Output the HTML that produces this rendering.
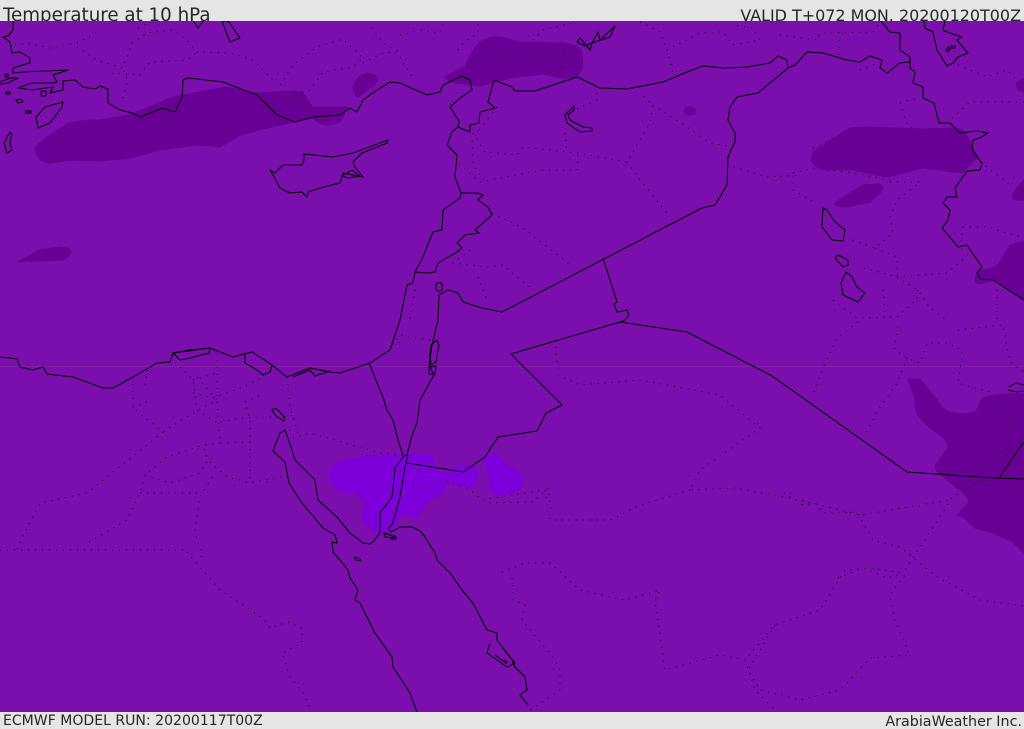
<!DOCTYPE html>
<html><head><meta charset="utf-8"><title>Temperature at 10 hPa</title>
<style>
html,body{margin:0;padding:0;background:#e5e5e5;width:1024px;height:729px;overflow:hidden}
svg{display:block;position:absolute;left:0;top:0}
text{font-family:"DejaVu Sans",sans-serif;fill:#262626}
.c{fill:none;stroke:#000;stroke-width:1;stroke-linejoin:round}
.d{fill:none;stroke:#000;stroke-width:1;stroke-dasharray:1 6;stroke-linecap:butt;opacity:.8}
</style></head><body>
<svg width="1024" height="729" viewBox="0 0 1024 729" xmlns="http://www.w3.org/2000/svg">
<defs><clipPath id="m"><rect x="0" y="21" width="1024" height="691"/></clipPath></defs>
<rect width="1024" height="729" fill="#e5e5e5"/>
<text x="3" y="21" font-size="18.25">Temperature at 10 hPa</text>
<text x="1021" y="21" font-size="15.95" text-anchor="end">VALID T+072 MON. 20200120T00Z</text>
<text x="3" y="725" font-size="14.05">ECMWF MODEL RUN: 20200117T00Z</text>
<text x="1022" y="726" font-size="14.3" text-anchor="end">ArabiaWeather Inc.</text>
<g clip-path="url(#m)">
<rect x="0" y="21" width="1024" height="691" fill="#7a0fae"/>
<rect x="0" y="366" width="1024" height="1" fill="#85259f" opacity=".7"/>
<g fill="#680095" stroke="#680095" stroke-width="1" stroke-linejoin="round">
<path d="M35 150Q36 145 43 140L67 124Q80 120 100 120L130 115L173 97L227 87L257 93L293 91Q303 91 306 97L312 107L347 107L342 120Q335 125 328 125Q318 124 313 118L293 122L267 128L240 135L220 147Q210 146 197 145L160 150L130 158L100 161L73 160L50 163Q38 162 35 150Z"/>
<path d="M367 73Q377 74 378 80Q375 86 370 88L358 97Q353 94 353 88Q354 78 367 73Z"/>
<path d="M445 77L465 67Q472 50 480 42Q490 36 500 37L520 42L563 43Q580 45 582 52L583 67L577 77L563 78L543 74L510 78L480 86L457 83Q447 81 445 77Z"/>
<ellipse cx="690" cy="111" rx="5.5" ry="4"/>
<path d="M811 157Q812 152 820 147L850 128L867 127L920 129L957 128L965 132L978 157L962 173L923 168L887 177L853 170L827 170Q812 168 811 157Z"/>
<path d="M834 203L863 185L880 184Q884 188 881 192L870 202L847 207Q836 207 834 203Z"/>
<path d="M18 262L40 250L60 247Q72 248 71 252Q68 259 60 260L40 261Z"/>
<path d="M1016 83L1024 78V92L1018 90Z"/>
<path d="M1012 197Q1014 190 1024 180V200Q1013 201 1012 197Z"/>
<path d="M975 282L977 272L993 268Q1000 264 1003 257L1010 245L1024 241V300L993 280L980 284Z"/>
<path d="M908 379L920 379L937 400Q943 410 950 412Q965 415 970 413Q977 412 978 408Q980 400 983 398Q995 394 1007 394L1024 394V553L1013 542L993 533L975 528L965 518L957 515L969 502Q968 496 960 490L942 476Q932 468 937 463L948 448Q948 440 937 433Q925 425 918 415Q914 408 915 398Z"/>
</g>
<g fill="#7d00db" stroke="#7d00db" stroke-width="1" stroke-linejoin="round">
<path d="M329 475Q332 465 338 462L370 455L403 455L432 454L435 468L442 474L460 466L475 466Q478 475 477 483Q472 487 467 487L445 482L445 490L427 502L417 517L400 515L393 528L380 533L370 528Q362 522 362 517L365 503Q362 496 355 493L340 491Q331 486 329 475Z"/>
<path d="M483 460L493 453Q500 456 507 465L522 475Q524 482 522 487Q512 495 500 495Q491 494 490 488L488 473Z"/>
</g>
<g class="d">
<path d="M15 45L28 43L50 48L77 43L92 35L97 32"/>
<path d="M77 47L97 60L122 68L128 55L132 43L147 33L173 30L187 40L197 52L230 53L253 60L273 80"/>
<path d="M112 73L140 75L150 62L187 60L197 52"/>
<path d="M123 98L128 80L122 68"/>
<path d="M280 85L293 65L317 47L343 39L363 58L353 67L323 72L310 90L283 98L295 102L310 100"/>
<path d="M363 63L383 53L400 52L383 43L370 25"/>
<path d="M138 28L150 22"/>
<path d="M400 35L420 30L440 33L443 22"/>
<path d="M400 57L413 78"/>
<path d="M458 50L463 43L478 33L478 22"/>
<path d="M533 40L543 30L573 23"/>
<path d="M467 63L515 60L550 50L567 48L557 63L563 73"/>
<path d="M640 22L660 32L667 50L673 73"/>
<path d="M667 50L700 33L723 32L733 45L760 40L753 28L733 25"/>
<path d="M497 107L472 140L473 163L483 180"/>
<path d="M473 133L485 152L517 155L523 147L577 153L627 162L650 123L653 105L640 93"/>
<path d="M653 105L687 127L710 143L733 147"/>
<path d="M627 162L638 177L670 217"/>
<path d="M578 155L577 170L543 170L480 182L458 163"/>
<path d="M597 93L597 100L575 110"/>
<path d="M565 133L567 152"/>
<path d="M492 213L523 228L573 267"/>
<path d="M470 250L453 263L487 267L503 265L533 290"/>
<path d="M478 277L488 303"/>
<path d="M727 165L767 177L800 175"/>
<path d="M780 35L817 40L820 33L873 32L880 23"/>
<path d="M839 40L839 55"/>
<path d="M860 70L880 62"/>
<path d="M958 65L987 77L1007 70L1017 80"/>
<path d="M900 102L920 98"/>
<path d="M900 103L908 127L918 128"/>
<path d="M947 123L970 102L1024 102"/>
<path d="M780 177L793 175L793 190L815 203"/>
<path d="M793 173L813 168L853 173L890 180"/>
<path d="M813 148L835 138"/>
<path d="M890 182L920 182L897 200L890 217L893 233L875 248L847 238"/>
<path d="M875 248L897 257L897 277L860 267"/>
<path d="M897 277L947 273L970 253"/>
<path d="M980 162L1007 182L1013 188"/>
<path d="M963 227L987 227L1024 238"/>
<path d="M963 227L960 247"/>
<path d="M897 277L918 290L930 308L947 320"/>
<path d="M918 290L917 300L897 317L857 318L830 298"/>
<path d="M883 290L885 312"/>
<path d="M997 290L997 320"/>
<path d="M858 322L837 338L825 363L812 397"/>
<path d="M897 327L895 350L907 358L920 363L927 343L947 343L963 350L958 383L990 392"/>
<path d="M958 330L1003 325L1010 362L1024 372"/>
<path d="M907 358L897 383L878 410L865 435"/>
<path d="M998 402L1010 423L1007 460L1000 477L967 487L952 498L920 547L903 573"/>
<path d="M784 493L803 505L815 503L823 513L857 512L873 540L900 547L937 577L980 600L1024 606"/>
<path d="M838 578L863 568L887 578L903 573"/>
<path d="M555 340L558 375L580 385L640 380L720 395L760 428L700 470L690 490L735 488L800 500L860 515L950 500"/>
<path d="M690 490L640 505L610 520L550 520L545 490L480 500"/>
<path d="M405 487L420 488L447 482L467 488L487 503L533 502L548 488L552 513"/>
<path d="M502 572L525 563L550 563L580 590L625 600L660 590L655 600L665 670L720 655L745 660L775 625L820 610L845 570L870 568L903 573"/>
<path d="M512 578L513 600L525 605L522 620L553 657L560 670L560 690L530 710"/>
<path d="M745 660L755 690L775 710"/>
<path d="M775 625L748 670L760 690L800 700L840 690L870 658L910 655L895 620L890 595L905 575"/>
<path d="M293 438L310 433L380 453L403 455"/>
<path d="M267 482L285 475"/>
<path d="M133 377L133 408L163 432L193 413L217 400L197 377"/>
<path d="M133 408L150 400"/>
<path d="M148 370L145 385"/>
<path d="M180 367L193 380L197 410L217 423L240 418L283 417L295 415"/>
<path d="M193 380L217 373"/>
<path d="M193 393L213 398L243 387L263 377"/>
<path d="M217 353L217 400L220 443L250 442L250 420L245 402L260 395"/>
<path d="M287 377L290 408L298 433"/>
<path d="M163 432L137 453L87 493L40 503L20 542L17 550"/>
<path d="M0 550L187 550"/>
<path d="M220 443L203 445L167 457L145 475L140 493L127 520L87 543"/>
<path d="M145 475L170 483L200 473L208 460L203 445"/>
<path d="M210 462L227 477L250 483L287 475"/>
<path d="M250 442L250 483"/>
<path d="M212 477L200 497L195 533L202 553L200 560"/>
<path d="M140 493L200 493"/>
<path d="M187 552L220 590L263 618L270 628L288 622L302 628L302 643L282 653L290 677L303 693L312 712"/>
<path d="M430 340L400 335L392 345"/>
<path d="M415 290L410 320M392 340L405 345"/>
</g>
<g class="c">
<path d="M13 21L13 30L8 36L3 37L10 42L12 53L20 52L30 58L30 63L22 65L13 68L13 73L23 72L68 70L53 75L57 82L53 83L32 83L18 88L32 90L53 87L50 93L63 90L63 81L75 80L83 87L95 89L100 86L108 89L108 103L120 110L132 113L140 117L163 108L175 112L182 97L183 80L188 78L223 82L257 95L277 115L295 122L313 117L340 115L350 108L357 112L363 100L377 90L390 82L400 83L427 95L440 92L443 85L462 76L470 80L472 90L460 98L450 107L459 121L458 127L452 132L447 145L457 155L455 177L461 193L460 198L443 210L442 230L433 232L423 257L415 272L413 283L407 285L400 320L390 350L370 363L340 373L330 372L310 368L287 377L272 365L252 352L233 357L210 348L173 353L170 362L157 363L133 377L113 388L103 388L73 377L47 374L43 367L33 370L20 367L17 359L0 357"/>
<path d="M458 127L470 132L470 125L479 123L480 112L495 108L488 102L494 80L512 87L515 91L535 91L577 77L600 88L627 89L663 82L687 72L703 66L725 68L747 67L770 63L778 56L787 60L788 68L795 65L807 52L823 53L847 60L860 62L870 56L882 60L880 68L887 73L900 63L910 62"/>
<path d="M788 68L758 93L737 97L730 107L728 120L735 133L735 142L728 157L727 185L715 205L702 208L502 312L482 308L463 302L458 293L448 290L439 295L438 320L432 345L429 365L434 375L420 400L417 423L412 435L407 455"/>
<path d="M881 21L890 32L900 33L900 50L910 57L910 68L915 72L913 83L923 87L923 98L934 103L939 123L950 123L960 133L977 131L988 133L980 138L973 140L972 150L982 163L980 170L967 171L955 188L957 197L947 197L943 203L950 210L948 220L942 228L958 247L967 245L982 267L977 273L980 279L993 280L1024 300"/>
<path d="M924 21L925 28L933 32L937 50L947 66L953 63L958 57L968 53L957 40L962 37L950 33L943 30L945 21"/>
<path d="M946 50l2-3 2 2-2 3zM951 46l4 0 0 2-4 0z"/>
<path d="M461 193L477 193L483 195L478 200L488 207L492 215L475 230L479 233L465 235L457 243L462 248L457 252L438 263L435 272L428 273L415 272"/>
<path d="M369 363L384 400L387 410L393 420L398 440L403 455"/>
<path d="M404 456L395 468L392 497L380 513L380 533L372 543L370 544L363 543L350 533L337 517L318 500L315 480L295 460L292 450L285 430L280 433L273 451L285 462L289 483L298 497L302 503L323 528L335 535L337 543L332 542L333 552L340 560L348 570L350 578L358 590L355 600L360 603L375 633L392 657L393 667L410 693L417 712"/>
<path d="M408 455L405 467L400 497L395 515L392 525L388 528L391 532L400 527L412 527L420 531L425 537L435 553L437 560L450 573L462 590L473 603L487 630L497 633L497 640L503 648L512 660L515 667L525 677L527 690L520 695L528 705"/>
<path d="M404 456L408 455M407 463L463 472L485 457L498 437L537 431L546 413L562 405L511 354L620 322L687 332L772 376L907 472L995 478L1024 479"/>
<path d="M603 258L617 302L614 304L617 312L627 310L629 315L625 320L620 322"/>
<path d="M1000 477L1018 450L1024 442"/>
<path d="M304 154L333 157L353 153L388 140L387 143L362 153L353 162L355 167L363 177L353 175L343 173L340 183L320 188L308 192L307 197L302 192L290 193L280 188L272 173L270 170L275 173L283 165L302 165L304 160Z"/>
<path d="M342 176L352 170L360 176L348 178Z"/>
<path d="M63 102L45 107L36 117L38 128L50 123L62 107Z"/>
<path d="M10 132L4 143L7 153L12 150L10 143L12 134Z"/>
<path d="M222 21L230 42L240 38L233 28L228 21Z"/>
<path d="M193 21L198 28L203 21"/>
<path d="M0 82L10 78L18 78L8 83L0 84"/>
<path d="M6 92h4v2h-4zM16 100l5-1 2 3-5 1zM26 111h5v2h-5zM41 91l5 0 0 5-5 0zM5 74l3 0 0 3-3 0z"/>
<path d="M823 208L822 227L832 240L843 241L845 230L835 222L827 210Z"/>
<path d="M835 258L838 255L848 260L848 265L843 267Z"/>
<path d="M846 272L841 283L843 295L858 302L865 293L857 287L852 277Z"/>
<path d="M577 42L580 38L590 50L592 43L598 32L600 40L615 26L610 37L592 43L585 46Z"/>
<path d="M574 106L565 115L567 123L580 132L592 131L592 128L583 127L570 120L568 115L574 110Z"/>
<path d="M436 284Q440 281 442 284L442 290L439 292L436 289Z"/>
<path d="M431 345L437 340L439 345L436 362L431 365L430 355Z"/>
<path d="M429 367L436 366L435 374L429 374Z"/>
<path d="M173 353L190 350L210 348L209 353L190 358L180 360Z"/>
<path d="M245 353L245 363L257 370L263 375L270 372L272 365"/>
<path d="M293 377L310 370L315 376L330 371"/>
<path d="M272 410Q275 407 278 410L285 418L284 421L276 416Z"/>
<path d="M384 533l6 2 5 1-1 2-9-1zM391 537h5v2h-5z"/>
<path d="M354 557l5 1 2 3-5-1z"/>
<path d="M490 643L487 653L507 667L515 663L503 648M495 655l12 9M503 660l5 2"/>
<path d="M1009 387L1016 383L1024 385M1008 390L1017 392L1024 391"/>
</g>
</g>
</svg>
</body></html>
